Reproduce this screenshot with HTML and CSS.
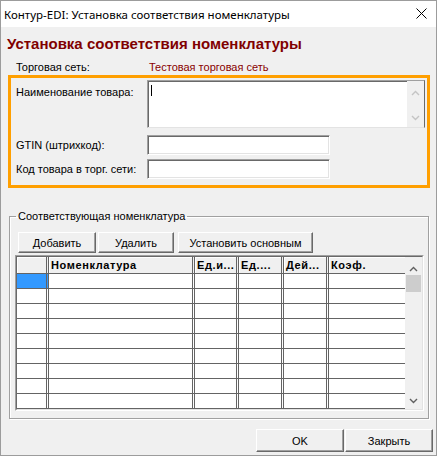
FILE: index.html
```html
<!DOCTYPE html>
<html>
<head>
    <meta charset="utf-8">
    <title>Контур-EDI: Установка соответствия номенклатуры</title>
    <link rel="stylesheet" href="styles.css">
</head>
<body>
    <div class="window">
        <div class="titlebar">
            <span class="caption">Контур-EDI: Установка соответствия номенклатуры</span>
            <svg class="close" width="11" height="11" viewBox="0 0 11 11">
                <path d="M0.5 0.5 L10.5 10.5 M10.5 0.5 L0.5 10.5" stroke="#000" stroke-width="1" fill="none" />
            </svg>
        </div>

        <div class="client">
            <h1 class="heading">Установка соответствия номенклатуры</h1>

            <div class="net">
                <span class="net-label">Торговая сеть:</span>
                <span class="net-name">Тестовая торговая сеть</span>
            </div>

            <div class="goods">
                <label class="lbl lbl-top">Наименование товара:</label>
                <div class="memo">
                    <span class="caret"></span>
                    <div class="memo-scroll">
                        <svg width="9" height="6" viewBox="0 0 9 6"><path d="M1 5 L4.5 1.5 L8 5" stroke="#c4c4c4" stroke-width="1.4" fill="none" /></svg>
                        <svg width="9" height="6" viewBox="0 0 9 6"><path d="M1 1 L4.5 4.5 L8 1" stroke="#c4c4c4" stroke-width="1.4" fill="none" /></svg>
                    </div>
                </div>

                <label class="lbl lbl-gtin">GTIN (штрихкод):</label>
                <div class="edit edit-gtin"></div>

                <label class="lbl lbl-code">Код товара в торг. сети:</label>
                <div class="edit edit-code"></div>
            </div>

            <fieldset class="group">
                <legend>Соответствующая номенклатура</legend>

                <div class="toolbar">
                    <button type="button" class="btn btn-add">Добавить</button>
                    <button type="button" class="btn btn-del">Удалить</button>
                    <button type="button" class="btn btn-main">Установить основным</button>
                </div>

                <div class="grid">
                    <div class="grid-body">
                        <div class="table">
                            <div class="cell hd"></div>
                            <div class="cell hd">Номенклатура</div>
                            <div class="cell hd">Ед.и...</div>
                            <div class="cell hd">Ед....</div>
                            <div class="cell hd">Дей...</div>
                            <div class="cell hd last">Коэф.</div>

                            <div class="cell rh sel"></div><div class="cell"></div><div class="cell"></div><div class="cell"></div><div class="cell"></div><div class="cell last"></div>
                            <div class="cell rh"></div><div class="cell"></div><div class="cell"></div><div class="cell"></div><div class="cell"></div><div class="cell last"></div>
                            <div class="cell rh"></div><div class="cell"></div><div class="cell"></div><div class="cell"></div><div class="cell"></div><div class="cell last"></div>
                            <div class="cell rh"></div><div class="cell"></div><div class="cell"></div><div class="cell"></div><div class="cell"></div><div class="cell last"></div>
                            <div class="cell rh"></div><div class="cell"></div><div class="cell"></div><div class="cell"></div><div class="cell"></div><div class="cell last"></div>
                            <div class="cell rh"></div><div class="cell"></div><div class="cell"></div><div class="cell"></div><div class="cell"></div><div class="cell last"></div>
                            <div class="cell rh"></div><div class="cell"></div><div class="cell"></div><div class="cell"></div><div class="cell"></div><div class="cell last"></div>
                            <div class="cell rh"></div><div class="cell"></div><div class="cell"></div><div class="cell"></div><div class="cell"></div><div class="cell last"></div>
                            <div class="cell rh"></div><div class="cell"></div><div class="cell"></div><div class="cell"></div><div class="cell"></div><div class="cell last"></div>
                        </div>
                        <div class="vscroll">
                            <svg class="arr" width="9" height="6" viewBox="0 0 9 6"><path d="M1 5 L4.5 1.5 L8 5" stroke="#606060" stroke-width="1.4" fill="none" /></svg>
                            <div class="thumb"></div>
                            <svg class="arr arr-down" width="9" height="6" viewBox="0 0 9 6"><path d="M1 1 L4.5 4.5 L8 1" stroke="#606060" stroke-width="1.4" fill="none" /></svg>
                        </div>
                    </div>
                </div>
            </fieldset>

            <div class="footer">
                <button type="button" class="btn btn-foot">OK</button>
                <button type="button" class="btn btn-foot">Закрыть</button>
            </div>
        </div>
    </div>
</body>
</html>
```

FILE: styles.css
```css
* {
    box-sizing: border-box;
}

body {
    margin: 0;
    padding: 0;
    font-family: "Liberation Sans", Arial, sans-serif;
    font-size: 11px;
    color: #000;
    background: #fff;
}

.window {
    width: 437px;
    height: 456px;
    border: 1px solid #9c9c9c;
    background: #f0f0f0;
    display: flex;
    flex-direction: column;
}

.titlebar {
    height: 26px;
    flex: none;
    background: #fff;
    display: flex;
    align-items: center;
    justify-content: space-between;
    padding: 0 9px 0 3px;
    font-family: "Noto Sans", "Segoe UI", sans-serif;
    font-size: 11.5px;
}

.close {
    display: block;
    margin-top: -1px;
}

.client {
    flex: 1;
    display: flex;
    flex-direction: column;
}

.heading {
    margin: 8px 0 0 6px;
    font-family: "Liberation Sans", Arial, sans-serif;
    font-size: 15px;
    line-height: 18px;
    font-weight: bold;
    color: #800000;
}

.net {
    display: flex;
    margin: 7px 0 0 15px;
    height: 14px;
    line-height: 14px;
}

.net-label {
    width: 133px;
}

.net-name {
    color: #8a0000;
}

/* выделенный блок с полями товара */
.goods {
    margin: 1px 0 0 7px;
    width: 422px;
    height: 113px;
    border: 3px solid #ff9f00;
    display: grid;
    grid-template-columns: 131px 183px 1fr;
    grid-template-rows: 48px auto auto;
    align-content: start;
    padding: 2px 2px 0 5px;
}

.lbl {
    grid-column: 1;
    line-height: 14px;
}

.lbl-top {
    padding-top: 5px;
}

.lbl-gtin,
.lbl-code {
    align-self: center;
}

.lbl-gtin,
.edit-gtin {
    margin-top: 7px;
}

.lbl-code,
.edit-code {
    margin-top: 4px;
}

.memo {
    grid-column: 2 / 4;
    background: #fff;
    border: 1px solid;
    border-color: #a0a0a0 #696969 #e3e3e3 #a0a0a0;
    box-shadow: inset 1px 1px #696969;
    display: flex;
    justify-content: space-between;
}

.caret {
    width: 1px;
    height: 11px;
    background: #000;
    margin: 4px 0 0 3px;
}

.memo-scroll {
    width: 17px;
    background: #f0f0f0;
    display: flex;
    flex-direction: column;
    align-items: center;
    justify-content: space-between;
    padding: 9px 0 6px;
}

.memo-scroll svg {
    display: block;
}

.edit {
    grid-column: 2;
    height: 20px;
    background: #fff;
    border: 1px solid;
    border-color: #a0a0a0 #fff #fff #a0a0a0;
    box-shadow: inset 1px 1px #696969, inset -1px -1px #e3e3e3;
}

/* группа номенклатуры */
.group {
    margin: 22px 0 0 8px;
    width: 420px;
    padding: 9px 5px 7px 5px;
    border: 1px solid #a0a0a0;
    box-shadow: 1px 1px 0 #fff, inset 1px 1px 0 #fff;
    min-width: 0;
}

.group legend {
    padding: 0 2px;
    margin-left: 1px;
    line-height: 13px;
}

.toolbar {
    display: flex;
    margin-left: 3px;
    height: 21px;
}

.btn {
    font-family: "Liberation Sans", Arial, sans-serif;
    font-size: 11px;
    color: #000;
    background: #f0f0f0;
    border: 1px solid;
    border-color: #fff #696969 #696969 #fff;
    box-shadow: inset -1px -1px #a0a0a0;
    padding: 0;
    margin: 0;
}

.btn-add {
    width: 78px;
}

.btn-del {
    width: 76px;
    margin-left: 2px;
}

.btn-main {
    width: 135px;
    margin-left: 4px;
}

.grid {
    margin-top: 2px;
    width: 409px;
    height: 156px;
    border: 1px solid;
    border-color: #a0a0a0 #fff #fff #a0a0a0;
    display: flex;
}

.grid-body {
    flex: 1;
    border: 1px solid;
    border-color: #696969 #e3e3e3 #e3e3e3 #696969;
    display: flex;
    overflow: hidden;
}

.table {
    flex: 1;
    display: grid;
    grid-template-columns: 32px 146px 44px 45px 45px 1fr;
    grid-template-rows: 17px;
    grid-auto-rows: 15px;
    background: #fff;
    overflow: hidden;
}

.cell {
    border-right: 3px double #646464;
    border-bottom: 1px solid #646464;
}

.cell.last {
    border-right: none;
}

.cell.hd {
    background: #f0f0f0;
    font-weight: bold;
    letter-spacing: 0.6px;
    padding: 2px 0 0 2px;
    white-space: nowrap;
    overflow: hidden;
    box-shadow: inset 1px 1px #fff;
}

.cell.sel {
    background: #3399ff;
}

.vscroll {
    width: 17px;
    flex: none;
    background: #f0f0f0;
    display: flex;
    flex-direction: column;
    align-items: center;
}

.arr {
    display: block;
    margin-top: 9px;
}

.thumb {
    width: 15px;
    height: 17px;
    margin-top: 3px;
    background: #cdcdcd;
}

.arr-down {
    margin-top: auto;
    margin-bottom: 5px;
}

.footer {
    display: flex;
    justify-content: flex-end;
    gap: 1px;
    margin-top: 10px;
    padding-right: 3px;
}

.btn-foot {
    width: 88px;
    height: 23px;
}
```
